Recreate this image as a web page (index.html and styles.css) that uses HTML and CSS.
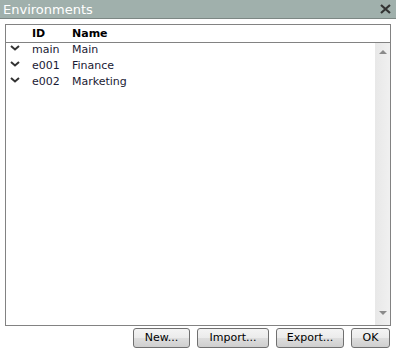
FILE: index.html
```html
<!DOCTYPE html>
<html>
<head>
<meta charset="utf-8">
<link rel="stylesheet" href="styles.css">
</head>
<body>
<div class="window">
  <div class="titlebar">
    <span class="title">Environments</span>
    <svg class="close" width="11" height="10" viewBox="0 0 11 10"><path d="M1 1 L10 9 M10 1 L1 9" stroke="#333" stroke-width="2.2" fill="none"/></svg>
  </div>
  <div class="content">
    <div class="box">
      <div class="head">
        <span class="c0"></span><span class="c1">ID</span><span class="c2">Name</span>
      </div>
      <div class="body">
        <div class="list">
          <div class="row"><span class="c0"><svg width="10" height="6" viewBox="0 0 10 6"><path d="M1 1 L5 4.5 L9 1" stroke="#333" stroke-width="2" fill="none"/></svg></span><span class="c1">main</span><span class="c2">Main</span></div>
          <div class="row"><span class="c0"><svg width="10" height="6" viewBox="0 0 10 6"><path d="M1 1 L5 4.5 L9 1" stroke="#333" stroke-width="2" fill="none"/></svg></span><span class="c1">e001</span><span class="c2">Finance</span></div>
          <div class="row"><span class="c0"><svg width="10" height="6" viewBox="0 0 10 6"><path d="M1 1 L5 4.5 L9 1" stroke="#333" stroke-width="2" fill="none"/></svg></span><span class="c1">e002</span><span class="c2">Marketing</span></div>
        </div>
        <div class="scrollbar">
          <svg class="arrow" width="8" height="5" viewBox="0 0 8 5"><path d="M0 4 L4 0 L8 4 Z" fill="#8a8a8a"/></svg>
          <svg class="arrow" width="8" height="5" viewBox="0 0 8 5"><path d="M0 0 L4 4 L8 0 Z" fill="#8a8a8a"/></svg>
        </div>
      </div>
    </div>
    <div class="buttons">
      <button class="btn w-new">New...</button>
      <button class="btn w-import">Import...</button>
      <button class="btn w-export">Export...</button>
      <button class="btn w-ok">OK</button>
    </div>
  </div>
</div>
</body>
</html>
```
FILE: styles.css
```css
html, body {
  margin: 0;
  padding: 0;
  background: #ffffff;
}
.window {
  width: 396px;
  height: 352px;
  font-family: "DejaVu Sans", Verdana, sans-serif;
  font-size: 11px;
  overflow: hidden;
}
.titlebar {
  height: 18px;
  background: #a0b0ac;
  border-bottom: 1px solid #7c8784;
  display: flex;
  align-items: flex-start;
  justify-content: space-between;
}
.title {
  color: #ffffff;
  font-size: 13px;
  line-height: 16px;
  padding: 2px 0 0 3px;
}
.close {
  margin: 4px 5px 0 0;
}
.content {
  padding: 5px 5px 0 5px;
}
.box {
  height: 300px;
  border: 1px solid #828282;
  display: flex;
  flex-direction: column;
}
.head {
  height: 17px;
  line-height: 17px;
  border-bottom: 1px solid #828282;
  display: flex;
  font-weight: bold;
  color: #000000;
}
.c0 {
  width: 26px;
  flex: none;
  display: flex;
  justify-content: flex-start;
  padding-left: 4px;
  box-sizing: border-box;
}
.c1 {
  width: 40px;
  flex: none;
}
.c2 {
  flex: 1;
}
.body {
  flex: 1;
  display: flex;
}
.list {
  flex: 1;
  padding-top: 0;
}
.row {
  height: 16px;
  line-height: 14px;
  display: flex;
  color: #1a1a33;
}
.row .c0 {
  padding-top: 2px;
  height: 16px;
  align-items: flex-start;
}
.row .c0 svg {
  display: block;
}
.scrollbar {
  width: 15px;
  background: linear-gradient(to right, #e8e8e8, #f0f0f0);
  display: flex;
  flex-direction: column;
  justify-content: space-between;
  align-items: center;
  padding: 7px 0 9px 0;
  box-sizing: border-box;
}
.arrow {
  display: block;
}
.buttons {
  display: flex;
  justify-content: flex-end;
  gap: 7px;
  margin-top: 2px;
  padding-right: 1px;
}
.btn {
  height: 20px;
  padding: 0;
  font-family: "DejaVu Sans", Verdana, sans-serif;
  font-size: 11px;
  color: #000000;
  border: 1px solid #707070;
  border-radius: 3px;
  background: linear-gradient(to bottom, #f4f4f4 0%, #ebebeb 50%, #dddddd 51%, #cfcfcf 100%);
  line-height: 18px;
}
.w-new { width: 57px; }
.w-import { width: 72px; }
.w-export { width: 68px; }
.w-ok { width: 39px; }
```
